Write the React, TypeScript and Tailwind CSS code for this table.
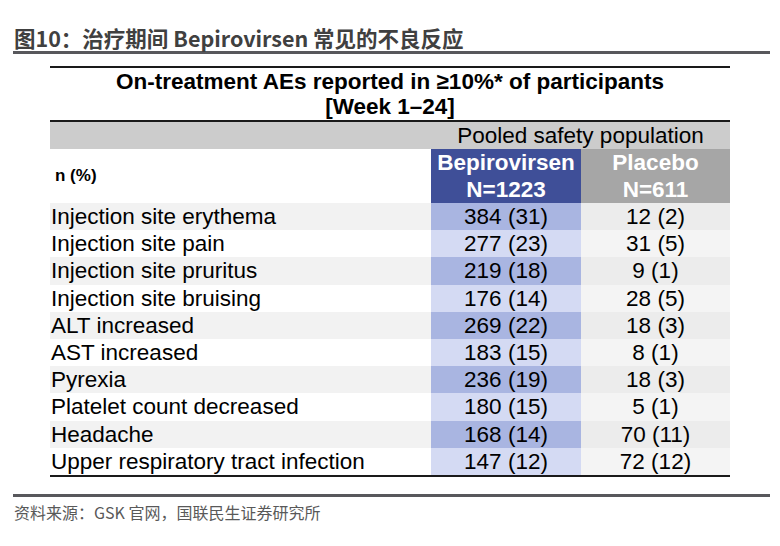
import React from 'react';

const rows: [string, string, string][] = [
    ['Injection site erythema', '384 (31)', '12 (2)'],
    ['Injection site pain', '277 (23)', '31 (5)'],
    ['Injection site pruritus', '219 (18)', '9 (1)'],
    ['Injection site bruising', '176 (14)', '28 (5)'],
    ['ALT increased', '269 (22)', '18 (3)'],
    ['AST increased', '183 (15)', '8 (1)'],
    ['Pyrexia', '236 (19)', '18 (3)'],
    ['Platelet count decreased', '180 (15)', '5 (1)'],
    ['Headache', '168 (14)', '70 (11)'],
    ['Upper respiratory tract infection', '147 (12)', '72 (12)'],
];

const cjk = { fontFamily: '"Noto Sans CJK SC", "Noto Sans", sans-serif' };
const arial = { fontFamily: '"Liberation Sans", Arial, sans-serif' };

export default function App() {
    return (
        <div className="w-[780px] h-[546px] bg-white overflow-hidden pt-[25px]">
            {/* 标题 */}
            <div className="pl-[14px] h-[26px] leading-[26px] text-[21.5px] font-bold text-[#404040]" style={cjk}>
                图10：治疗期间 Bepirovirsen 常见的不良反应
            </div>
            <div className="ml-[13px] w-[757px] h-[3px] bg-[#58585c]" />

            {/* 表格 */}
            <div className="ml-[50px] w-[680px] mt-[12px] text-black" style={arial}>
                <div className="border-t-2 border-b-2 border-[#1a1a1a] text-center font-bold text-[22.5px] leading-[26px]">
                    <div className="pt-[1px]">On-treatment AEs reported in ≥10%* of participants</div>
                    <div className="-mt-[1px]">[Week 1–24]</div>
                </div>

                <div className="grid grid-cols-[381px_299px] bg-[#cccccc] h-[27px] text-[22.5px] leading-[27px]">
                    <div />
                    <div className="text-center">Pooled safety population</div>
                </div>

                <div className="grid grid-cols-[381px_150px_149px] h-[54px]">
                    <div className="flex items-center pl-[5px] text-[17px] font-bold">n (%)</div>
                    <div className="bg-[#3f4f98] text-white font-bold text-[22.5px] leading-[27px] text-center">
                        <div>Bepirovirsen</div>
                        <div>N=1223</div>
                    </div>
                    <div className="bg-[#a6a6a6] text-white font-bold text-[22.5px] leading-[27px] text-center">
                        <div>Placebo</div>
                        <div>N=611</div>
                    </div>
                </div>

                <div className="border-b-2 border-[#1a1a1a]">
                    {rows.map(([name, bep, pla], i) => {
                        const odd = i % 2 === 0;
                        return (
                            <div key={name} className="grid grid-cols-[381px_150px_149px] h-[27.2px] text-[22.5px] leading-[27px]">
                                <div className={`pl-[1px] ${odd ? 'bg-[#f2f2f2]' : 'bg-white'}`}>{name}</div>
                                <div className={`text-center ${odd ? 'bg-[#a9b5e1]' : 'bg-[#d4daf3]'}`}>{bep}</div>
                                <div className={`text-center ${odd ? 'bg-[#ececec]' : 'bg-[#f4f4f4]'}`}>{pla}</div>
                            </div>
                        );
                    })}
                </div>
            </div>

            {/* 资料来源 */}
            <div className="ml-[13px] w-[757px] h-[3px] bg-[#58585c] mt-[17px]" />
            <div className="pl-[14px] mt-[3px] text-[16px] leading-[24px] text-[#595959]" style={cjk}>
                资料来源：GSK 官网，国联民生证券研究所
            </div>
        </div>
    );
}
